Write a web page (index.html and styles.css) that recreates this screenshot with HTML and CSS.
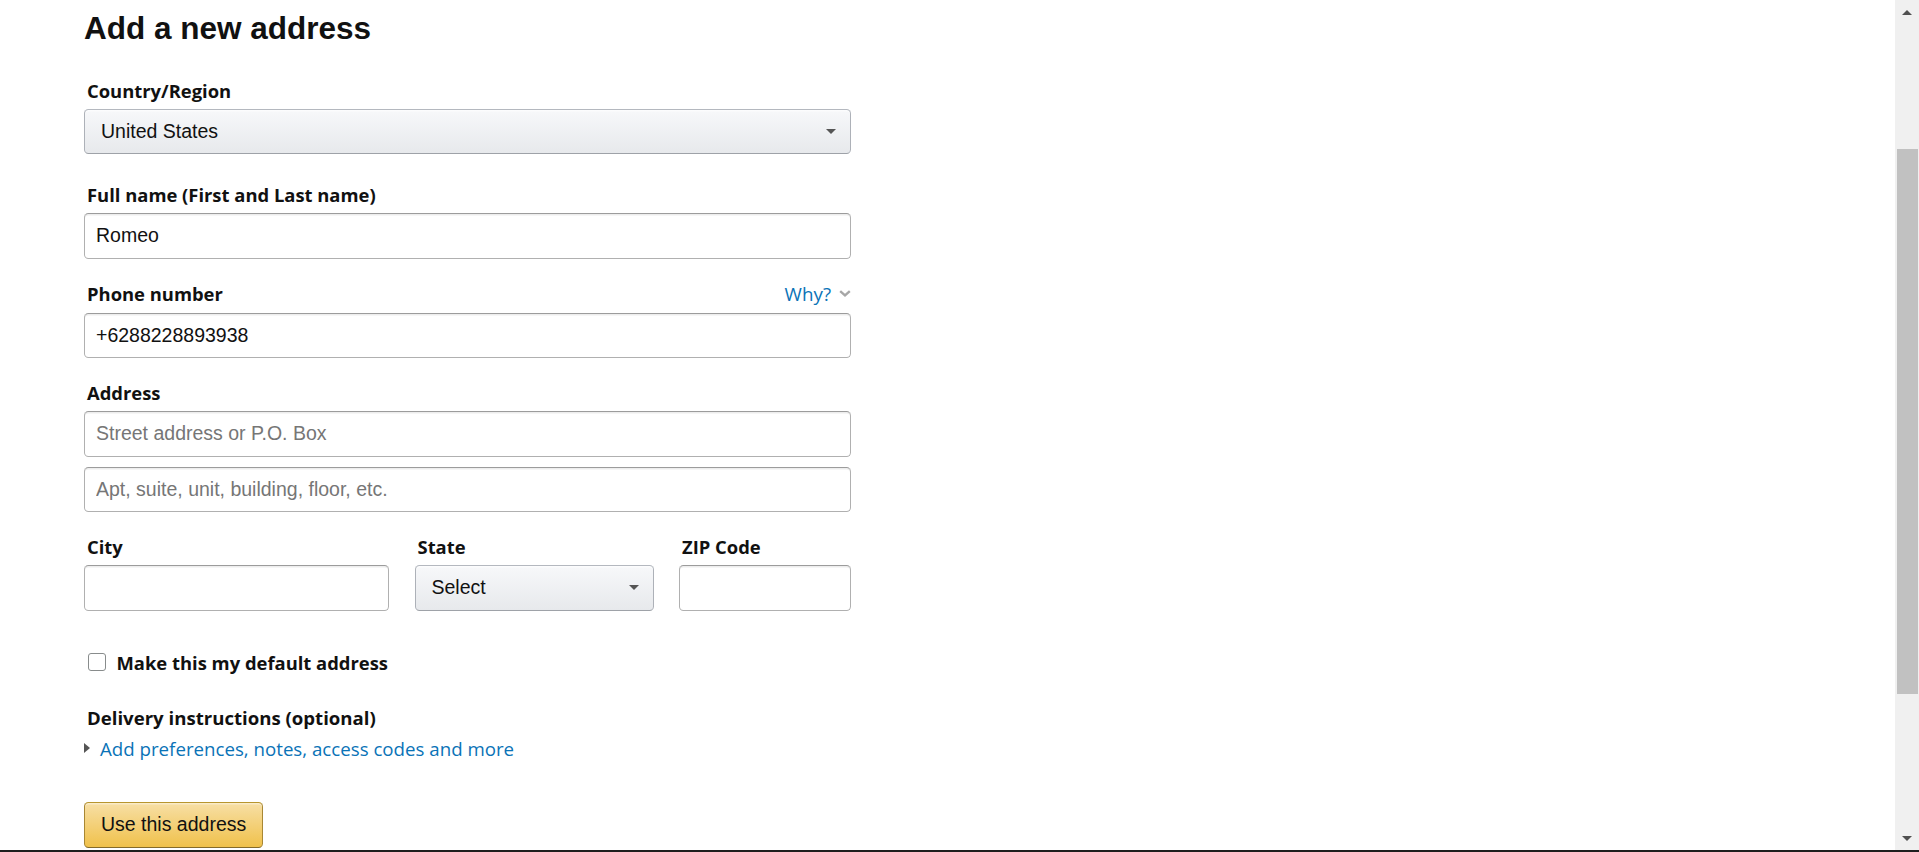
FILE: index.html
```html
<!DOCTYPE html>
<html lang="en">
<head>
    <meta charset="UTF-8">
    <meta name="viewport" content="width=device-width, initial-scale=1.0">
    <title>Add a new address</title>
    <link rel="stylesheet" href="styles.css">
</head>
<body>
    <div class="screen">
        <div class="viewport">
            <main class="page">
                <h1 class="title">Add a new address</h1>

                <form class="address-form">
                    <div class="field field-country">
                        <label class="field-label">Country/Region</label>
                        <div class="dropdown">
                            <span>United States</span>
                            <i class="caret"></i>
                        </div>
                    </div>

                    <div class="field">
                        <label class="field-label" for="full-name">Full name (First and Last name)</label>
                        <input class="text-input" id="full-name" type="text" value="Romeo">
                    </div>

                    <div class="field">
                        <div class="label-row">
                            <label class="field-label" for="phone">Phone number</label>
                            <a class="why" href="#">Why?<svg width="12" height="7" viewBox="0 0 12 7"><polyline points="1.2,1.2 6,5.4 10.8,1.2" fill="none" stroke="#a7a7a7" stroke-width="2.4"/></svg></a>
                        </div>
                        <input class="text-input" id="phone" type="text" value="+6288228893938">
                    </div>

                    <div class="field">
                        <label class="field-label" for="address-1">Address</label>
                        <input class="text-input" id="address-1" type="text" placeholder="Street address or P.O. Box">
                        <input class="text-input second-line" type="text" placeholder="Apt, suite, unit, building, floor, etc.">
                    </div>

                    <div class="field-row">
                        <div class="field">
                            <label class="field-label" for="city">City</label>
                            <input class="text-input" id="city" type="text">
                        </div>
                        <div class="field">
                            <label class="field-label">State</label>
                            <div class="dropdown">
                                <span>Select</span>
                                <i class="caret"></i>
                            </div>
                        </div>
                        <div class="field">
                            <label class="field-label" for="zip">ZIP Code</label>
                            <input class="text-input" id="zip" type="text">
                        </div>
                    </div>

                    <label class="checkbox-row">
                        <input class="checkbox" type="checkbox">
                        <span>Make this my default address</span>
                    </label>

                    <div class="delivery">
                        <div class="field-label">Delivery instructions (optional)</div>
                        <a class="expander" href="#"><i class="expander-icon"></i>Add preferences, notes, access codes and more</a>
                    </div>

                    <button class="primary-btn" type="button">Use this address</button>
                </form>
            </main>

            <div class="scrollbar">
                <div class="scroll-btn"><i class="arrow-up"></i></div>
                <div class="scroll-track"><div class="scroll-thumb"></div></div>
                <div class="scroll-btn"><i class="arrow-down"></i></div>
            </div>
        </div>
        <div class="frame-edge"></div>
    </div>
</body>
</html>
```

FILE: styles.css
```css
body {
    margin: 0;
    padding: 0;
    background: #fff;
    color: #111;
    font-family: "Open Sans", Arial, sans-serif;
}

.screen {
    display: flex;
    flex-direction: column;
    height: 852px;
    overflow: hidden;
}

.viewport {
    display: flex;
    height: 850px;
}

.page {
    flex: 1;
    padding: 10px 0 0 84px;
}

.title {
    margin: 0 0 31px;
    font-family: "Liberation Sans", Arial, sans-serif;
    font-size: 31.5px;
    font-weight: bold;
    line-height: 36px;
    color: #111;
}

.address-form {
    width: 767px;
}

.field {
    margin-bottom: 21px;
}

.field-country {
    margin-bottom: 27px;
}

.field-label {
    display: block;
    padding-left: 3px;
    margin-bottom: 5px;
    font-size: 18.4px;
    font-weight: 700;
    line-height: 27px;
    color: #111;
}

.label-row {
    display: flex;
    justify-content: space-between;
    align-items: baseline;
    margin-bottom: 5px;
}

.label-row .field-label {
    margin-bottom: 0;
}

.why {
    font-size: 18.8px;
    line-height: 27px;
    color: #0a73b7;
    text-decoration: none;
}

.why svg {
    margin-left: 8px;
    vertical-align: 4px;
}

.text-input {
    display: block;
    box-sizing: border-box;
    width: 100%;
    height: 45.5px;
    padding: 0 11px;
    border: 1px solid #b0b0b0;
    border-top-color: #9c9c9c;
    border-radius: 4.5px;
    box-shadow: inset 0 1.5px 0 rgba(0,0,0,.07);
    font-family: "Liberation Sans", Arial, sans-serif;
    font-size: 19.5px;
    color: #111;
    background: #fff;
    outline: none;
}

.text-input::placeholder {
    color: #767676;
}

.second-line {
    margin-top: 10px;
}

.dropdown {
    box-sizing: border-box;
    height: 45px;
    display: flex;
    align-items: center;
    justify-content: space-between;
    padding: 0 14px 0 16px;
    border: 1px solid #adb1b8;
    border-top-color: #b4b8bf;
    border-bottom-color: #9ea2a8;
    border-radius: 4.5px;
    background: linear-gradient(#f7f8fa, #e7e9ec);
    box-shadow: inset 0 1.5px 0 rgba(255,255,255,.6);
    font-family: "Liberation Sans", Arial, sans-serif;
    font-size: 19.5px;
    color: #111;
}

.caret {
    width: 0;
    height: 0;
    border-left: 5.5px solid transparent;
    border-right: 5.5px solid transparent;
    border-top: 5px solid #555;
}

.field-row {
    display: grid;
    grid-template-columns: 305fr 239fr 172fr;
    column-gap: 25.5px;
}

.field-row .field {
    margin-bottom: 0;
}

.field-row .dropdown {
    height: 45.5px;
}

.checkbox-row {
    display: flex;
    align-items: center;
    height: 27px;
    margin-top: 38px;
    font-size: 18.4px;
    font-weight: 700;
    color: #111;
}

.checkbox {
    appearance: none;
    box-sizing: border-box;
    width: 17.5px;
    height: 17.5px;
    margin: 0 11px 0 4px;
    border: 1.5px solid #888c8c;
    border-radius: 3px;
    background: #fff;
}

.delivery {
    margin-top: 28px;
}

.delivery .field-label {
    margin-bottom: 4px;
    font-size: 18.6px;
}

.expander {
    display: flex;
    align-items: center;
    font-size: 18.7px;
    line-height: 27px;
    color: #0a73b7;
    text-decoration: none;
}

.expander-icon {
    width: 0;
    height: 0;
    margin-right: 10px;
    border-top: 5px solid transparent;
    border-bottom: 5px solid transparent;
    border-left: 6px solid #555;
}

.primary-btn {
    display: block;
    margin-top: 40px;
    height: 46px;
    padding: 0 16px;
    border: 1px solid #a88734;
    border-color: #b8962e #a88734 #846a29;
    border-radius: 4.5px;
    background: linear-gradient(#f7dfa5, #f0c14b);
    box-shadow: inset 0 1.5px 0 rgba(255,255,255,.4);
    font-family: "Liberation Sans", Arial, sans-serif;
    font-size: 19.5px;
    color: #111;
}

/* fake browser scrollbar */
.scrollbar {
    width: 24px;
    display: flex;
    flex-direction: column;
    background: #f0f0f0;
}

.scroll-btn {
    height: 24px;
    display: flex;
    align-items: center;
    justify-content: center;
}

.arrow-up, .arrow-down {
    width: 0;
    height: 0;
    border-left: 5px solid transparent;
    border-right: 5px solid transparent;
}

.arrow-up {
    border-bottom: 5px solid #505050;
}

.arrow-down {
    border-top: 5px solid #505050;
}

.scroll-track {
    flex: 1;
    padding: 125px 1px 0 2px;
}

.scroll-thumb {
    height: 545px;
    background: #c1c1c1;
}

.frame-edge {
    height: 2px;
    background: #1e1e1e;
}
```
